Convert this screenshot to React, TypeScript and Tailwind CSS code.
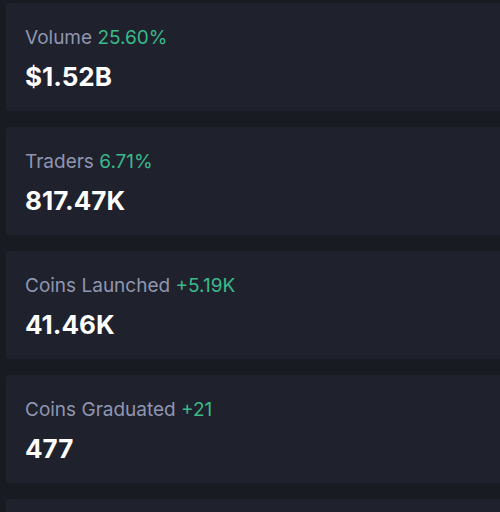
const stats = [
  { label: 'Volume', change: '25.60%', value: '$1.52B' },
  { label: 'Traders', change: '6.71%', value: '817.47K' },
  { label: 'Coins Launched', change: '+5.19K', value: '41.46K' },
  { label: 'Coins Graduated', change: '+21', value: '477' },
];

export default function App() {
  return (
    <div
      className="h-[512px] overflow-hidden bg-[#181b22] pt-[3px] pl-[6px]"
      style={{ fontFamily: 'Inter, "Noto Sans", sans-serif' }}
    >
      <div className="flex flex-col gap-[16px] -mr-4">
        {stats.map((s) => (
          <div key={s.label} className="h-[108px] rounded-[4px] bg-[#1f222c] pl-[19px] pt-[23px]">
            <div className="text-[19px] leading-[24px] text-[#9095b1]">
              {s.label} <span className="text-[#3ab98a]">{s.change}</span>
            </div>
            <div className="mt-[11px] text-[26px] font-bold leading-[32px] text-white">{s.value}</div>
          </div>
        ))}
        <div className="h-[108px] rounded-[4px] bg-[#1f222c]" />
      </div>
    </div>
  );
}
